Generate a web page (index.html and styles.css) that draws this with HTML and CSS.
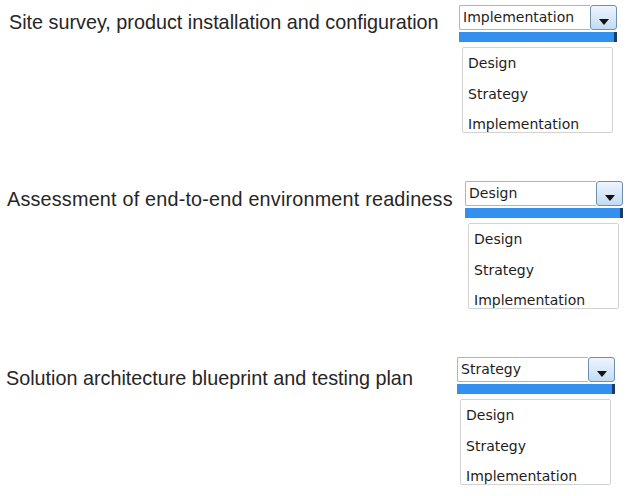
FILE: index.html
```html
<!DOCTYPE html>
<html lang="en">
<head>
  <meta charset="UTF-8">
  <title>Match the activities</title>
  <link rel="stylesheet" href="styles.css">
</head>
<body>

  <div class="page">

    <div class="row row-one">
      <div class="label">Site survey, product installation and configuration</div>
      <div class="picker">
        <div class="combo">
          <div class="value">Implementation</div>
          <div class="arrow">
            <svg width="10" height="6" viewBox="0 0 10 6"><polygon points="0,0 10,0 5,6" fill="#111"/></svg>
          </div>
        </div>
        <div class="highlight"></div>
        <div class="options">
          <div class="option">Design</div>
          <div class="option">Strategy</div>
          <div class="option">Implementation</div>
        </div>
      </div>
    </div>

    <div class="row row-two">
      <div class="label">Assessment of end-to-end environment readiness</div>
      <div class="picker">
        <div class="combo">
          <div class="value">Design</div>
          <div class="arrow">
            <svg width="10" height="6" viewBox="0 0 10 6"><polygon points="0,0 10,0 5,6" fill="#111"/></svg>
          </div>
        </div>
        <div class="highlight"></div>
        <div class="options">
          <div class="option">Design</div>
          <div class="option">Strategy</div>
          <div class="option">Implementation</div>
        </div>
      </div>
    </div>

    <div class="row row-three">
      <div class="label">Solution architecture blueprint and testing plan</div>
      <div class="picker">
        <div class="combo">
          <div class="value">Strategy</div>
          <div class="arrow">
            <svg width="10" height="6" viewBox="0 0 10 6"><polygon points="0,0 10,0 5,6" fill="#111"/></svg>
          </div>
        </div>
        <div class="highlight"></div>
        <div class="options">
          <div class="option">Design</div>
          <div class="option">Strategy</div>
          <div class="option">Implementation</div>
        </div>
      </div>
    </div>

  </div>

</body>
</html>
```

FILE: styles.css
```css
body {
  margin: 0;
  padding: 0;
  background: #fff;
  color: #222;
  overflow: hidden;
}

.page {
  padding-top: 5px;
}

.row {
  display: flex;
  align-items: flex-start;
  height: 176px;
}

.row-three {
  height: auto;
}

.label {
  font-family: 'Liberation Sans', Arial, sans-serif;
  font-size: 19.8px;
  line-height: 23px;
  color: #262626;
  white-space: nowrap;
}

.row-one .label { padding: 6px 0 0 9px; }
.row-two .label { padding: 7px 0 0 7px; letter-spacing: 0.2px; }
.row-three .label { padding: 10px 0 0 6px; }

.picker {
  margin-left: auto;
  width: 158px;
  font-family: 'DejaVu Sans', Verdana, sans-serif;
  font-size: 14px;
  color: #1e1e1e;
}

.row-one .picker { margin-right: 9px; }
.row-two .picker { margin-right: 3px; }
.row-three .picker { margin-right: 11px; }

/* closed combo box */
.combo {
  display: flex;
  height: 25px;
}

.value {
  flex: 1;
  border: 1px solid #b4b4b4;
  border-right: none;
  border-radius: 2px 0 0 2px;
  padding-left: 3px;
  line-height: 23px;
  background: #fff;
}

.arrow {
  width: 25px;
  height: 23px;
  border: 1px solid #6f8fae;
  border-radius: 3px;
  background: linear-gradient(#eef5fc, #d9e9f8 50%, #c2dbf2);
  display: flex;
  justify-content: center;
  align-items: flex-end;
}

.arrow svg {
  margin-bottom: 4px;
}

/* selected (empty) item */
.highlight {
  margin-top: 2px;
  height: 10px;
  background: #3390ef;
  border-right: 3px solid #1d3c63;
}

/* open list */
.options {
  margin: 5px 4px 0 3px;
  height: 84px;
  overflow: hidden;
  border: 1px solid #d2d2d2;
  border-radius: 2px;
  background: #fff;
  padding-left: 5px;
}

.option {
  line-height: 30.5px;
}
```
